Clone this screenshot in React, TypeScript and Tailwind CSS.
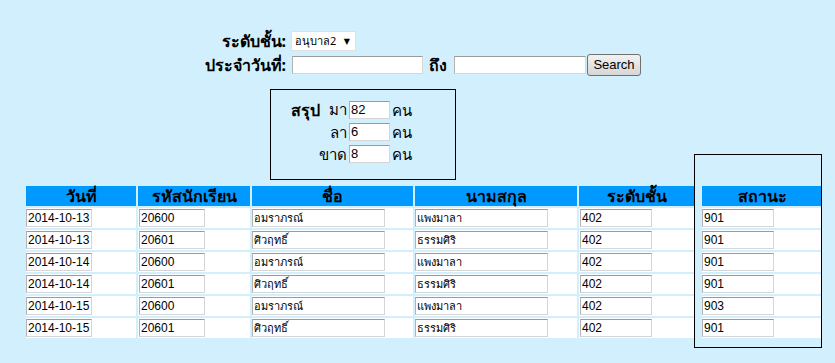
import React from "react";

const rows = [
  { date: "2014-10-13", id: "20600", name: "อมราภรณ์", last: "แพงมาลา", level: "402", status: "901" },
  { date: "2014-10-13", id: "20601", name: "ศิวฤทธิ์", last: "ธรรมศิริ", level: "402", status: "901" },
  { date: "2014-10-14", id: "20600", name: "อมราภรณ์", last: "แพงมาลา", level: "402", status: "901" },
  { date: "2014-10-14", id: "20601", name: "ศิวฤทธิ์", last: "ธรรมศิริ", level: "402", status: "901" },
  { date: "2014-10-15", id: "20600", name: "อมราภรณ์", last: "แพงมาลา", level: "402", status: "903" },
  { date: "2014-10-15", id: "20601", name: "ศิวฤทธิ์", last: "ธรรมศิริ", level: "402", status: "901" },
];

const thai = "font-['Tahoma','Noto_Sans','DejaVu_Sans',sans-serif]";
const field =
  "h-[18px] bg-white border border-[#d6d6d6] border-t-[#9a9a9a] border-l-[#b4b4b4] px-[1px] text-black outline-none";

const Cell = ({ w, children }: { w: string; children: React.ReactNode }) => (
  <div className={`${w} h-[20px] bg-white flex items-center`}>{children}</div>
);

export default function App() {
  return (
    <div className={`relative w-[835px] h-[363px] overflow-hidden bg-[#d1effd] ${thai}`}>
      {/* search form */}
      <div className="pt-[31px] flex flex-col">
        <div className="flex items-center h-[20px]">
          <div className="w-[288px] text-right pr-[2px] font-bold text-[16px]">ระดับชั้น:</div>
          <div className="ml-[3px] w-[65px] h-[20px] bg-white border border-[#e0e0e0] flex items-center justify-between pl-[3px] pr-[5px]">
            <span className="text-[11px]">อนุบาล2</span>
            <span className="text-[8px]">▼</span>
          </div>
        </div>
        <div className="flex items-center h-[22px] mt-[3px]">
          <div className="w-[288px] text-right pr-[2px] font-bold text-[16px]">ประจำวันที่:</div>
          <input readOnly className={`${field} ml-[4px] w-[131px]`} />
          <span className="ml-[6px] w-[25px] font-bold text-[16px]">ถึง</span>
          <input readOnly className={`${field} w-[132px]`} />
          <button className="ml-[1px] w-[54px] h-[22px] rounded-[3px] border border-[#707070] bg-gradient-to-b from-[#f2f2f2] to-[#d6d6d6] text-[13px] font-['Liberation_Sans',sans-serif] text-black">
            Search
          </button>
        </div>
      </div>

      {/* summary box */}
      <div className="ml-[270px] mt-[13px] w-[186px] h-[91px] border border-black pt-[9px] pl-[20px]">
        {[
          { pre: "สรุป", label: "มา", value: "82" },
          { pre: "", label: "ลา", value: "6" },
          { pre: "", label: "ขาด", value: "8" },
        ].map((r) => (
          <div key={r.label} className="flex items-center h-[22px] text-[15px]">
            <div className="w-[56px] flex justify-between">
              <span className="font-bold text-[16px]">{r.pre}</span>
              <span>{r.label}</span>
            </div>
            <input
              readOnly
              value={r.value}
              className={`${field} ml-[2px] w-[41px] text-[13px] font-['Liberation_Sans',sans-serif]`}
            />
            <span className="ml-[2px]">คน</span>
          </div>
        ))}
      </div>

      {/* data table */}
      <div className="ml-[26px] mt-[6px] flex flex-col gap-[2px]">
        <div className="flex gap-[2px] font-bold text-[16px] text-center">
          {[
            ["วันที่", "w-[110px]"],
            ["รหัสนักเรียน", "w-[112px]"],
            ["ชื่อ", "w-[161px]"],
            ["นามสกุล", "w-[162px]"],
            ["ระดับชั้น", "w-[115px]"],
            ["สถานะ", "w-[120px] ml-[6px]"],
          ].map(([t, w]) => (
            <div key={t} className={`${w} h-[20px] bg-[#0099ff] leading-[20px]`}>
              {t}
            </div>
          ))}
        </div>
        {rows.map((r, i) => (
          <div key={i} className="flex gap-[2px] text-[12px] font-['Liberation_Sans',sans-serif]">
            <Cell w="w-[110px]">
              <input readOnly value={r.date} className={`${field} w-[66px]`} />
            </Cell>
            <Cell w="w-[112px]">
              <input readOnly value={r.id} className={`${field} ml-[1px] w-[66px]`} />
            </Cell>
            <Cell w="w-[161px]">
              <input readOnly value={r.name} className={`${field} w-[133px] text-[11px] ${thai}`} />
            </Cell>
            <Cell w="w-[162px]">
              <input readOnly value={r.last} className={`${field} w-[133px] text-[11px] ${thai}`} />
            </Cell>
            <Cell w="w-[115px]">
              <input readOnly value={r.level} className={`${field} ml-[1px] w-[72px]`} />
            </Cell>
            <Cell w="w-[120px] ml-[6px]">
              <input readOnly value={r.status} className={`${field} w-[72px]`} />
            </Cell>
          </div>
        ))}
      </div>

      {/* status column frame */}
      <div className="absolute left-[694px] top-[154px] w-[128px] h-[194px] border border-black pointer-events-none" />
    </div>
  );
}
